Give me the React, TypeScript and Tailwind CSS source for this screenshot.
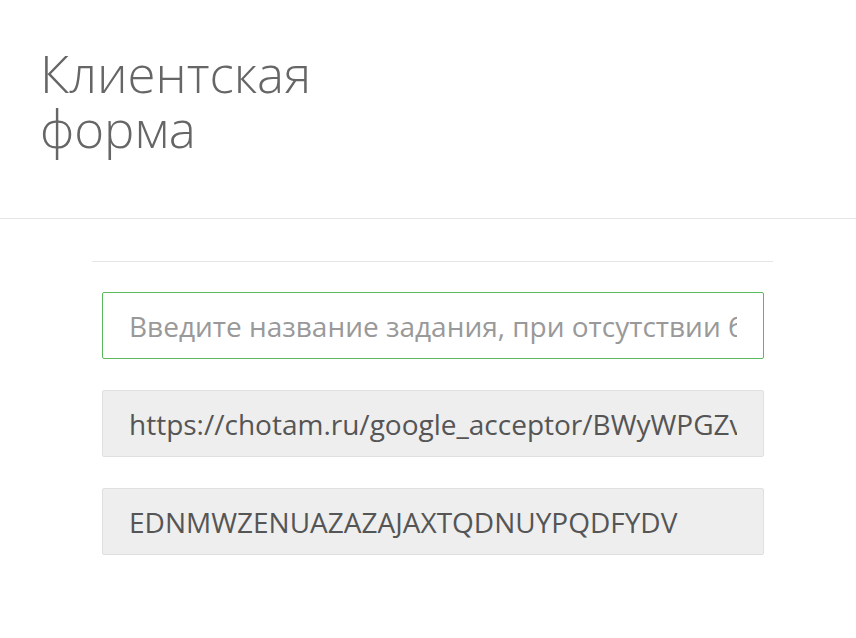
export default function App() {
  return (
    <div className="min-h-[638px] bg-white font-['Open_Sans',sans-serif]">
      <header className="border-b border-[#e5e5e5] px-10 pt-[46px] pb-[62px]">
        <h1 className="text-[51px] font-light leading-[55px] text-[#666666]">
          Клиентская
          <br />
          форма
        </h1>
      </header>
      <div className="px-[92px] pt-[42px] w-[865px]">
        <div className="border-t border-[#e5e5e5] px-[10px] pt-[30px] w-[681px]">
          <div className="flex flex-col gap-[31px] w-[662px]">
            <input
              autoFocus
              placeholder="Введите название задания, при отсутствии будет сгенерировано автоматически"
              className="h-[67px] w-full rounded-[2px] border border-[#5cb85c] bg-white px-[26px] text-[28px] text-[#555555] outline-none placeholder:text-[#999999] caret-[#555555]"
            />
            <input
              readOnly
              value="https://chotam.ru/google_acceptor/BWyWPGZvXkQ"
              className="h-[67px] w-full rounded-[2px] border border-[#e0e0e0] bg-[#eeeeee] px-[26px] text-[28px] text-[#555555] outline-none"
            />
            <input
              readOnly
              value="EDNMWZENUAZAZAJAXTQDNUYPQDFYDV"
              className="h-[67px] w-full rounded-[2px] border border-[#e0e0e0] bg-[#eeeeee] px-[26px] text-[28px] text-[#555555] outline-none"
            />
          </div>
        </div>
      </div>
    </div>
  );
}
